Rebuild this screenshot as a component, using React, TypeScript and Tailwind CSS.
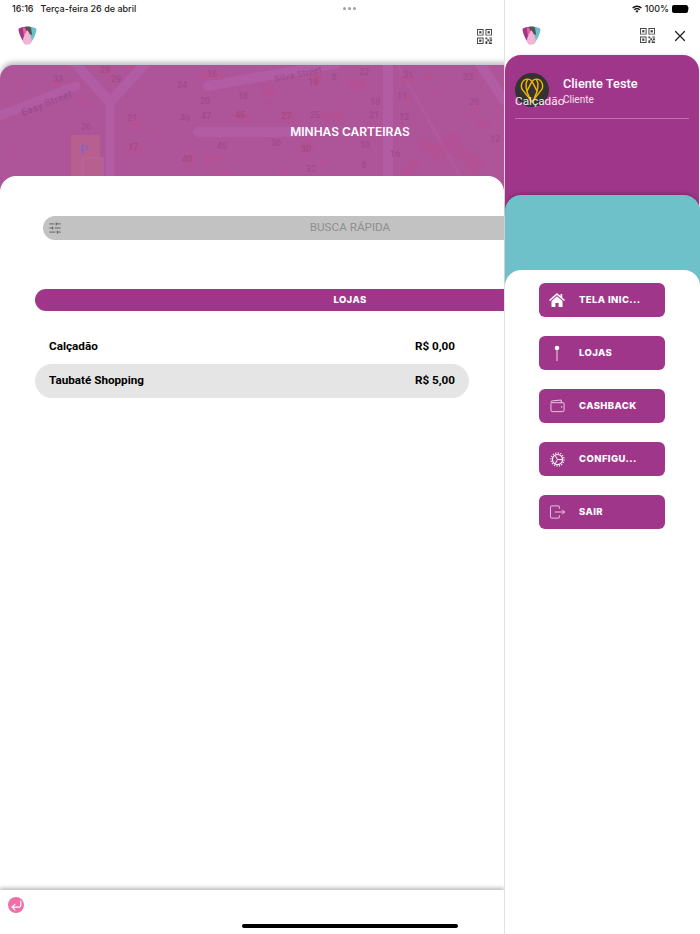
import { CornerDownLeft, SlidersHorizontal, X } from "lucide-react";

const BLOCKS = [
  [50, 78, 12, 8], [100, 66, 14, 10], [124, 64, 10, 6], [198, 72, 26, 8], [262, 84, 12, 12], [310, 74, 12, 12], [128, 115, 14, 8],
  [78, 98, 14, 8], [130, 116, 10, 14], [233, 113, 18, 8], [318, 113, 22, 8], [126, 142, 18, 12], [183, 152, 12, 14], [205, 154, 18, 8],
  [300, 148, 8, 8], [285, 110, 10, 14], [332, 112, 12, 8], [215, 172, 14, 4], [280, 172, 6, 4], [16, 80, 8, 6], [10, 148, 6, 6],
  [302, 140, 14, 10], [320, 158, 6, 6], [264, 100, 8, 4], [334, 100, 8, 4], [150, 130, 10, 4], [350, 78, 16, 12], [402, 74, 12, 8],
  [424, 74, 8, 6], [470, 70, 8, 6], [405, 96, 8, 6], [432, 92, 6, 6], [470, 108, 10, 6], [478, 120, 12, 8],
];

const LABELS: [string, number, number][] = [
  ["33", 58, 82], ["29", 105, 73], ["29", 116, 82], ["15", 212, 77], ["24", 182, 88], ["20", 205, 104], ["18", 243, 99], ["21", 132, 121],
  ["49", 185, 121], ["47", 206, 119], ["45", 240, 118], ["27", 286, 119], ["25", 315, 118], ["26", 86, 130], ["17", 133, 150], ["45", 222, 149],
  ["36", 276, 146], ["30", 306, 152], ["40", 187, 162], ["32", 311, 172], ["19", 313, 85], ["8", 334, 80], ["22", 364, 75], ["18", 375, 105],
  ["11", 402, 99], ["31", 408, 78], ["21", 374, 118], ["13", 404, 120], ["10", 365, 148], ["16", 395, 157], ["8", 364, 168], ["33", 468, 80],
  ["26", 474, 105], ["12", 495, 142],
];

function MapBackground() {
  return (
    <svg viewBox="0 0 504 127" className="absolute left-0 top-0 h-[127px] w-[504px]" fill="none" aria-hidden="true">
      <g transform="translate(0 -65)">
        <g stroke="#b25ca4" strokeLinecap="round">
          <path d="M-4 117 L76 86" strokeWidth="9" />
          <path d="M72 60 L110 102 L145 64" strokeWidth="10" />
          <path d="M110 100 V180" strokeWidth="9" />
          <path d="M208 86 L335 64" strokeWidth="10" />
          <path d="M198 132 H300" strokeWidth="10" />
          <path d="M388 60 V180" strokeWidth="10" />
          <path d="M480 64 L504 100" strokeWidth="10" />
          <path d="M395 60 L460 176" strokeWidth="3" strokeOpacity="0.6" />
        </g>
        <rect x="71" y="135" width="29" height="45" fill="#b7608f" />
        <path d="M83 158 H103 V180 H83Z" fill="#b7608f" stroke="#b766a6" />
        <text x="84" y="154" textAnchor="middle" fontSize="13" fontWeight="700" fill="#9360b8" fontFamily="Roboto, sans-serif">P</text>
        <g fill="#b7508f" opacity="0.5">
          {BLOCKS.map(([x, y, w, h], i) => (
            <rect key={i} x={x} y={y} width={w} height={h} />
          ))}
        </g>
        <g fill="#b7508f" opacity="0.5">
          <path d="M424 135 L437 148 L452 132 L462 140 L438 164 L416 144Z" />
          <path d="M458 146 L486 160 L474 176 L462 160 L452 154Z" />
          <path d="M400 176 L412 158 L420 164 L412 176Z" />
        </g>
        <g fill="#a04a8a" fontSize="9" fontWeight="500" fontFamily="Roboto, sans-serif" textAnchor="middle">
          {LABELS.map(([t, x, y], i) => (
            <text key={i} x={x} y={y}>{t}</text>
          ))}
        </g>
        <text x="48" y="106" transform="rotate(-22 48 106)" textAnchor="middle" fontSize="9.5" letterSpacing="0.6" fill="#99498a" fontFamily="Roboto, sans-serif">Easy Street</text>
        <text x="299" y="77" transform="rotate(-12 299 77)" textAnchor="middle" fontSize="8.5" letterSpacing="0.5" fill="#99498a" fontFamily="Roboto, sans-serif">Silva Street</text>
      </g>
    </svg>
  );
}

function Logo() {
  return (
    <svg viewBox="0 0 20 20" className="h-[20px] w-[19px]" aria-hidden="true">
      <path d="M0.5 2.5 C2 1 5 0.5 7 0.5 L10 10 L8 19 C5 15 1 9 0.5 2.5Z" fill="#a0368a" />
      <path d="M19.5 2.5 C18 1 15 0.5 13 0.5 L11 10 L12 19 C15 15 19 9 19.5 2.5Z" fill="#6ec0c9" />
      <path d="M6.5 0.5 C8 0 12 0 13.5 0.5 L15 9 L10 7Z" fill="#555558" />
      <path d="M5 1 L7 1 L11 9 L6 9Z" fill="#ee5f9f" />
      <path d="M10 4 C13 9 15 13 14 16 C13 19.5 7 20.5 5.5 16.5 C4.5 13 7 8 10 4Z" fill="#f5b3d6" />
    </svg>
  );
}

function QrIcon() {
  return (
    <svg viewBox="0 0 16 16" className="h-[15px] w-[15px]" fill="#444" aria-hidden="true">
      <path fillRule="evenodd" d="M0 0h7v7H0zM1 1v5h5V1z" />
      <path d="M2.3 2.3h2.4v2.4H2.3z" />
      <path fillRule="evenodd" d="M9 0h7v7H9zM10 1v5h5V1z" />
      <path d="M11.3 2.3h2.4v2.4h-2.4z" />
      <path fillRule="evenodd" d="M0 9h7v7H0zM1 10v5h5v-5z" />
      <path d="M2.3 11.3h2.4v2.4H2.3z" />
      <path d="M9 9h2v2H9zM13 9h3v1h-3zM11 11h2v2h-2zM14 11h2v2h-2zM9 13h2v3H9zM13 13h1v1h-1zM12.5 14.5h3.5V16h-3.5z" />
    </svg>
  );
}

function HomeIcon() {
  return (
    <svg viewBox="0 0 16 14" className="h-[14px] w-[16px]" fill="white" aria-hidden="true">
      <path d="M8 0 L11.5 3 V1 H13.2 V4.5 L16 7 L15 8 L8 2 L1 8 L0 7Z" />
      <path d="M2.5 8 L8 3.2 L13.5 8 V14 H9.6 V10 H6.4 V14 H2.5Z" />
    </svg>
  );
}

function PinIcon() {
  return (
    <svg viewBox="0 0 16 16" className="h-[16px] w-[16px]" fill="white" aria-hidden="true">
      <circle cx="8" cy="3" r="2.3" />
      <rect x="7.6" y="5" width="0.8" height="11" />
    </svg>
  );
}

function WalletIcon() {
  return (
    <svg viewBox="0 0 16 14" className="h-[14px] w-[15px]" fill="none" stroke="white" strokeOpacity="0.85" strokeWidth="0.9" aria-hidden="true">
      <path d="M1 4 V11.5 A1.5 1.5 0 0 0 2.5 13 H13.5 A1.5 1.5 0 0 0 15 11.5 V4.5 A1 1 0 0 0 14 3.5 H2 A1 1 0 0 1 1 2.8 C1 2 1.5 1.8 2.2 1.6 L12 0.6 V3.5" />
      <circle cx="12.5" cy="8" r="0.7" fill="white" stroke="none" />
    </svg>
  );
}

function GearIcon() {
  return (
    <svg viewBox="0 0 16 16" className="h-[15px] w-[15px]" fill="none" stroke="white" aria-hidden="true">
      <circle cx="8" cy="8" r="7" strokeWidth="1.3" strokeDasharray="1.2 1.55" />
      <circle cx="8" cy="8" r="5.4" strokeWidth="1.2" />
      <path d="M8 8 L5.3 3.3 M8 8 L5.3 12.7 M8 8 H13.4" strokeWidth="1" />
    </svg>
  );
}

function LogoutIcon() {
  return (
    <svg viewBox="0 0 16 14" className="h-[14px] w-[15px]" fill="none" stroke="white" strokeOpacity="0.85" strokeWidth="0.9" aria-hidden="true">
      <path d="M10 3.5 V1.5 A1 1 0 0 0 9 0.5 H1.5 A1 1 0 0 0 0.5 1.5 V12.5 A1 1 0 0 0 1.5 13.5 H9 A1 1 0 0 0 10 12.5 V10.5" />
      <path d="M5 7 H15.5 M13 4.5 L15.5 7 L13 9.5" />
    </svg>
  );
}

function MallLogo() {
  return (
    <svg viewBox="0 0 24 24" className="h-[26px] w-[26px]" fill="none" stroke="#f4b400" strokeWidth="1.3" aria-hidden="true">
      <path d="M12 23 L3 11.5 C1 7.5 3 2 8 2 C10 2 11 3 12 4 C13 3 14 2 16 2 C21 2 23 7.5 21 11.5Z" />
      <path d="M8 2 C5.5 6 6.5 13 10 20 M16 2 C18.5 6 17.5 13 14 20" />
      <path d="M12 4 L7.3 13 M12 4 L16.7 13" />
    </svg>
  );
}

const MENU = [
  { label: "TELA INIC...", icon: <HomeIcon /> },
  { label: "LOJAS", icon: <PinIcon /> },
  { label: "CASHBACK", icon: <WalletIcon /> },
  { label: "CONFIGU...", icon: <GearIcon /> },
  { label: "SAIR", icon: <LogoutIcon /> },
];

export default function App() {
  return (
    <div className="flex h-[934px] w-[700px] overflow-hidden bg-white font-['Roboto',sans-serif]">
      <div className="relative flex h-full w-[504px] shrink-0 flex-col overflow-hidden">
        <div className="flex h-[16px] items-center pl-[12px] pt-[1px] font-['Inter',sans-serif] text-[9px] font-medium text-[#222]">
          <span>16:16</span>
          <span className="ml-[7px]">Terça-feira 26 de abril</span>
          <span className="ml-[207px] flex gap-[2px]">
            <span className="h-[3px] w-[3px] rounded-full bg-gray-400" />
            <span className="h-[3px] w-[3px] rounded-full bg-gray-400" />
            <span className="h-[3px] w-[3px] rounded-full bg-gray-400" />
          </span>
        </div>
        <div className="flex h-[49px] items-center justify-between pb-[9px] pl-[18px] pr-[12px]">
          <Logo />
          <QrIcon />
        </div>

        <div className="relative h-[127px] w-[700px] shrink-0 overflow-hidden rounded-t-[14px] bg-[#ae5499] shadow-[0_-3px_5px_rgba(0,0,0,0.25)]">
          <MapBackground />
          <p className="relative pt-[58px] text-center font-['Inter',sans-serif] text-[12px] font-semibold text-white">MINHAS CARTEIRAS</p>
        </div>

        <div className="relative mt-[-16px] w-[504px] flex-1 overflow-hidden rounded-t-[16px] bg-white">
          <div className="w-[700px] px-[35px] pt-[40px]">
            <div className="ml-[8px] mr-[8px] flex h-[24px] items-center rounded-full bg-[#c2c2c2] pl-[4px]">
              <SlidersHorizontal size={14} strokeWidth={1.5} className="ml-[1px] text-[#555]" />
              <span className="flex-1 pr-[19px] text-center text-[11.7px] text-[#8f8f8f]">BUSCA RÁPIDA</span>
            </div>
            <div className="mt-[49px] flex h-[22px] items-center justify-center rounded-full bg-[#a0368a] font-['Inter',sans-serif] text-[9.5px] font-extrabold tracking-[0.4px] text-white">
              LOJAS
            </div>
          </div>
          <div className="mt-[18px] w-[469px] pl-[35px]">
            <div className="flex h-[35px] items-center justify-between px-[14px] text-[11.7px] font-bold text-black">
              <span>Calçadão</span>
              <span>R$ 0,00</span>
            </div>
            <div className="flex h-[34px] items-center justify-between rounded-full bg-[#e5e5e5] px-[14px] text-[11.7px] font-bold text-black">
              <span>Taubaté Shopping</span>
              <span>R$ 5,00</span>
            </div>
          </div>
        </div>

        <div className="relative h-[44px] w-[504px] shrink-0 bg-white pl-[8px] pt-[7px] shadow-[0_-2px_4px_rgba(0,0,0,0.28)]">
          <div className="flex h-[16px] w-[16px] items-center justify-center rounded-full bg-[#f26ea9]">
            <CornerDownLeft size={13} strokeWidth={2.2} className="text-white" />
          </div>
        </div>
        <div className="absolute left-[242px] top-[924px] h-[4px] w-[216px] rounded-full bg-black" />
      </div>

      <div className="flex h-full flex-1 flex-col border-l border-[#e2e2e2]">
        <div className="flex h-[16px] items-center justify-end gap-[3px] pr-[11px] pt-[1px] font-['Inter',sans-serif] text-[9px] font-medium text-[#222]">
          <svg viewBox="0 0 12 9" className="h-[8px] w-[10px]" fill="#111" aria-hidden="true">
            <path d="M6 9 L4.2 7 A2.6 2.6 0 0 1 7.8 7Z" />
            <path d="M3.3 6 L2.2 4.8 A5.4 5.4 0 0 1 9.8 4.8 L8.7 6 A3.9 3.9 0 0 0 3.3 6Z" />
            <path d="M1.4 3.9 L0.2 2.7 A8.2 8.2 0 0 1 11.8 2.7 L10.6 3.9 A6.6 6.6 0 0 0 1.4 3.9Z" />
          </svg>
          <span>100%</span>
          <span className="flex items-center">
            <span className="block h-[8px] w-[16px] rounded-[2px] bg-black" />
            <span className="block h-[3px] w-[1px] bg-gray-400" />
          </span>
        </div>
        <div className="flex h-[39px] items-center pl-[17px]">
          <Logo />
          <span className="ml-[99px]"><QrIcon /></span>
          <X size={18} strokeWidth={1.6} className="ml-[16px] text-[#222]" />
        </div>

        <div className="h-[160px] w-[194px] shrink-0 rounded-t-[16px] bg-[#a0368a] px-[10px] pt-[18px] shadow-[0_0_3px_rgba(0,0,0,0.15)]">
          <div className="relative flex h-[46px] border-b border-white/30">
            <div className="flex h-[34px] w-[34px] shrink-0 items-center justify-center rounded-full bg-[#333]">
              <MallLogo />
            </div>
            <span className="absolute left-0 top-[21px] text-[11.8px] leading-[15px] text-white/90">Calçadão</span>
            <div className="ml-[14px] text-white">
              <p className="mt-[3px] text-[12.8px] font-medium leading-[15px]">Cliente Teste</p>
              <p className="mt-[3px] text-[10px] leading-[12px] text-white/85">Cliente</p>
            </div>
          </div>
        </div>

        <div className="mt-[-20px] h-[91px] w-[195px] shrink-0 rounded-t-[16px] bg-[#6ec0c9] shadow-[0_-2px_4px_rgba(0,0,0,0.18)]" />

        <div className="mt-[-16px] flex w-[195px] flex-1 flex-col items-center gap-[19px] rounded-t-[16px] bg-white pr-[1px] pt-[13px]">
          {MENU.map((item) => (
            <div key={item.label} className="flex h-[34px] w-[126px] shrink-0 items-center rounded-[6px] bg-[#a0368a] font-['Inter',sans-serif] text-[9.5px] font-extrabold tracking-[0.4px] text-white">
              <span className="flex w-[40px] shrink-0 justify-center pr-[4px]">{item.icon}</span>
              <span>{item.label}</span>
            </div>
          ))}
        </div>
      </div>
    </div>
  );
}
